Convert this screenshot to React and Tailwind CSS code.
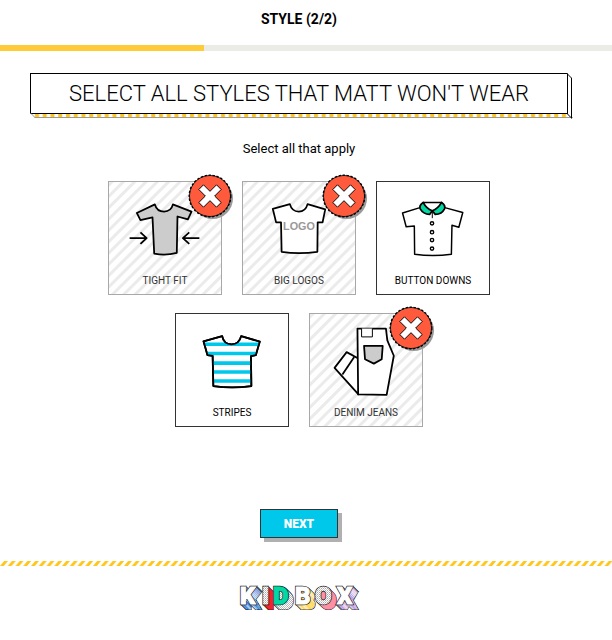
import React, { useState } from 'react';
import clsx from 'clsx';

const STYLES = [
  { id: 'tight-fit', label: 'TIGHT FIT', Icon: TightFitIcon },
  { id: 'big-logos', label: 'BIG LOGOS', Icon: BigLogosIcon },
  { id: 'button-downs', label: 'BUTTON DOWNS', Icon: ButtonDownsIcon },
  { id: 'stripes', label: 'STRIPES', Icon: StripesIcon },
  { id: 'denim-jeans', label: 'DENIM JEANS', Icon: DenimJeansIcon },
];

function IconFrame({ children }) {
  return (
    <svg
      viewBox="0 0 114 90"
      className="h-[90px] w-full"
      fill="#fff"
      stroke="#000"
      strokeWidth="1.8"
      strokeLinejoin="round"
      aria-hidden="true"
    >
      {children}
    </svg>
  );
}

function TightFitIcon() {
  return (
    <IconFrame>
      <path
        fill="#ccc"
        d="M28.3 30.7 46.7 22C48 26.5 51 29.3 56 29.3S64 26.5 65 22L84 29.3 80.3 37.3 69.7 34.3 69 71.3Q57.5 74.5 46 72L44.3 35.3 32 38Z"
      />
      <path fill="none" d="M21 56.3H38M32 50.5 38.3 56.3 32 62.2" />
      <path fill="none" d="M92 56.3H75.5M81.7 50.5 75.2 56.3 81.7 62.2" />
    </IconFrame>
  );
}

function BigLogosIcon() {
  return (
    <IconFrame>
      <path d="M30.3 26.5 47.7 21.7C49 26.5 52 29.3 56.7 29.3S64.5 26.5 65.7 21.7L83.7 27 81 40.3H76L75.7 70.3Q57 73 39.3 70.3L38.7 40.3H33.7Z" />
      <text
        x="57"
        y="48"
        textAnchor="middle"
        stroke="none"
        fill="#999"
        fontSize="11"
        fontWeight="700"
        fontFamily="Liberation Sans, sans-serif"
      >
        LOGO
      </text>
    </IconFrame>
  );
}

function ButtonDownsIcon() {
  return (
    <IconFrame>
      <path strokeWidth="1.5" d="M26 30.7 43.7 25.3 47 20H65.7L69 25.3 87.3 30.3 83.3 45.3 76.3 43.3 75.7 72.7Q57 75.3 38.3 72.7L38 44 29.7 44.7Z" />
      <path fill="#00d9a3" d="M47 20C44 22 43 24 44 26.5 46 30 49.5 32 53.5 32.2L56.3 28.5C52 27 49 24 47 20Z" />
      <path fill="#00d9a3" d="M65.7 20C68.7 22 69.7 24 68.7 26.5 67 30 63.5 32 59.3 32.2L56.3 28.5C60.5 27 63.5 24 65.7 20Z" />
      <path strokeWidth="1" d="M56.3 29V36" />
      <circle cx="56" cy="41.3" r="1.7" strokeWidth="1.4" />
      <circle cx="56" cy="50.3" r="1.7" strokeWidth="1.4" />
      <circle cx="56" cy="58.3" r="1.7" strokeWidth="1.4" />
      <circle cx="56" cy="67" r="1.7" strokeWidth="1.4" />
    </IconFrame>
  );
}

function StripesIcon() {
  const shirt =
    'M28 27 47 21.7C48 27 51.5 30 56.5 30S65 27 66.3 21.7L85.3 27.3 81.3 41 76.3 42 76.7 72.5Q57 75.3 38 72.5L37.3 41.7 32 41Z';
  return (
    <IconFrame>
      <clipPath id="striped-shirt">
        <path d={shirt} />
      </clipPath>
      <path d={shirt} />
      <path
        clipPath="url(#striped-shirt)"
        stroke="#00c8eb"
        strokeWidth="3.6"
        d="M26 30H88M26 39.5H88M26 49.2H88M26 58.3H88M26 67.5H88"
      />
      <path fill="none" d={shirt} />
    </IconFrame>
  );
}

function DenimJeansIcon() {
  return (
    <IconFrame>
      <path d="M37.3 38 25 54 49.3 81 52 46Z" />
      <path d="M45 43 33 60.7" />
      <path d="M48.3 14H77.3L78.7 26 85.3 41.7 78 81.5 49 81Z" />
      <path strokeWidth="1" d="M52.5 14V22.5H63.5V14" />
      <path fill="#ccc" d="M55 31.7H74L73 45.3 65 49.7 56 45.3Z" />
    </IconFrame>
  );
}

function RejectBadge() {
  return (
    <svg viewBox="0 0 46 46" className="absolute -top-2 -right-[13px] size-[46px]" aria-hidden="true">
      <circle cx="24.5" cy="24.5" r="20.5" fill="#999" />
      <circle cx="22" cy="22" r="20.5" fill="#ff5a3c" stroke="#222" strokeWidth="1" />
      <circle cx="22" cy="22" r="20.8" fill="none" stroke="#000" strokeWidth="1.4" strokeDasharray="2.3 1.7" />
      <path
        transform="rotate(45 22 22)"
        fill="#fff"
        stroke="#000"
        strokeWidth="0.9"
        d="M18.7 9.5H25.3V18.7H34.5V25.3H25.3V34.5H18.7V25.3H9.5V18.7H18.7Z"
      />
    </svg>
  );
}

function StyleCard({ item, checked, onToggle }) {
  const { id, label, Icon } = item;
  return (
    <label
      htmlFor={id}
      className={clsx(
        'relative flex size-[114px] cursor-pointer flex-col border',
        checked
          ? 'border-[#a8a8a8] bg-[repeating-linear-gradient(135deg,#ffffff_0px,#ebebeb_1px,#ebebeb_3px,#ffffff_4px,#ffffff_8px)] text-[#333]'
          : 'border-[#333] bg-white text-black'
      )}
    >
      <input id={id} type="checkbox" checked={checked} onChange={() => onToggle(id)} className="sr-only" />
      <Icon />
      <span className="text-center text-[10px] leading-[18px]">{label}</span>
      {checked && <RejectBadge />}
    </label>
  );
}

function Banner({ children }) {
  return (
    <div className="relative mx-[30px] border border-black bg-white">
      <h1 className="text-center text-[22px] leading-[39px] font-light">{children}</h1>
      {/* extruded bottom and right faces */}
      <div className="absolute top-full -right-px -left-px h-[5px] origin-top-left skew-x-[45deg] overflow-hidden border border-[#999] border-t-black bg-white">
        <svg className="block h-full w-full" aria-hidden="true">
          <defs>
            <pattern
              id="banner-dashes"
              width="7.75"
              height="8"
              patternUnits="userSpaceOnUse"
              patternTransform="skewX(-45)"
            >
              <rect x="3" width="4" height="8" fill="#ffc61a" />
            </pattern>
          </defs>
          <rect width="100%" height="100%" fill="url(#banner-dashes)" />
        </svg>
      </div>
      <div className="absolute -top-px -bottom-px left-full w-[5px] origin-top-left skew-y-[45deg] border border-black bg-white" />
    </div>
  );
}

const LOGO_LETTERS = [
  { char: 'K', x: 9, front: '#fff', side: 'url(#logo-blue)' },
  { char: 'I', x: 31, front: 'url(#logo-dots)', side: '#f5222d' },
  { char: 'D', x: 42, front: '#00d9a3', side: 'url(#logo-dots)' },
  { char: 'B', x: 64, front: '#fff', side: 'url(#logo-yellow)' },
  { char: 'O', x: 84, front: 'url(#logo-dots)', side: '#ff8fa3' },
  { char: 'X', x: 106, front: '#fff', side: 'url(#logo-purple)' },
];

const LOGO_STRIPES = [
  { id: 'logo-blue', color: '#1976e0' },
  { id: 'logo-yellow', color: '#ffd34d' },
  { id: 'logo-purple', color: '#b48be0' },
];

function Logo() {
  return (
    <svg viewBox="0 -8 136 44" className="h-11 w-[136px]" role="img" aria-label="Kidbox">
      <defs>
        {LOGO_STRIPES.map(({ id, color }) => (
          <pattern key={id} id={id} width="4" height="4" patternUnits="userSpaceOnUse" patternTransform="rotate(45)">
            <rect width="4" height="4" fill="#fff" />
            <rect width="2.4" height="4" fill={color} />
          </pattern>
        ))}
        <pattern id="logo-dots" width="2" height="2" patternUnits="userSpaceOnUse">
          <rect width="2" height="2" fill="#fff" />
          <rect width="1" height="1" fill="#aaa" />
          <rect x="1" y="1" width="1" height="1" fill="#ccc" />
        </pattern>
      </defs>
      {LOGO_LETTERS.map(({ char, x, front, side }) => (
        <g key={char} fontFamily="Roboto, sans-serif" fontSize="24" fontWeight="900">
          <g fill="#222" stroke="#222" strokeWidth="2.2">
            {[5, 4, 3, 2, 1].map((n) => (
              <use key={n} href={`#logo-${char}`} x={n} y={n} />
            ))}
          </g>
          <g fill={side} stroke={side} strokeWidth="1">
            {[5, 4, 3, 2, 1].map((n) => (
              <use key={n} href={`#logo-${char}`} x={n} y={n} />
            ))}
          </g>
          <use href={`#logo-${char}`} fill="#222" stroke="#222" strokeWidth="2.4" />
          <g fill={front} stroke={front} strokeWidth="1">
            <text id={`logo-${char}`} x={x} y="18">
              {char}
            </text>
          </g>
        </g>
      ))}
    </svg>
  );
}

const StyleQuiz = () => {
  const [rejected, setRejected] = useState(['tight-fit', 'big-logos', 'denim-jeans']);

  const handleToggle = (id) => {
    setRejected((prev) => (prev.includes(id) ? prev.filter((item) => item !== id) : [...prev, id]));
  };

  return (
    <div className="min-h-screen bg-white font-[Roboto,sans-serif] text-black">
      <header>
        <p className="pt-[9px] pr-[14px] pb-4 text-center text-sm leading-5 font-bold">STYLE (2/2)</p>
        <div className="h-[6px] bg-[#ebece6]">
          <div className="h-full w-1/3 bg-[#ffcb38]" />
        </div>
      </header>

      <main className="pt-[22px] pr-[14px]">
        <Banner>SELECT ALL STYLES THAT MATT WON'T WEAR</Banner>
        <form onSubmit={(e) => e.preventDefault()}>
          <fieldset>
            <legend className="w-full pt-[25px] text-center text-[13px] leading-5">Select all that apply</legend>
            <div className="mx-auto flex max-w-[400px] flex-wrap justify-center gap-x-5 gap-y-[18px] pt-[22px]">
              {STYLES.map((item) => (
                <StyleCard
                  key={item.id}
                  item={item}
                  checked={rejected.includes(item.id)}
                  onToggle={handleToggle}
                />
              ))}
            </div>
          </fieldset>
          <div className="flex justify-center pt-[82px]">
            <button
              type="submit"
              className="h-[29px] w-[78px] cursor-pointer border border-[#333] bg-[#00c8eb] text-xs font-black text-white shadow-[4px_4px_0_#b0b0b0]"
            >
              NEXT
            </button>
          </div>
        </form>
      </main>

      <footer className="pt-[23px]">
        <svg className="block h-[5px] w-full" aria-hidden="true">
          <defs>
            <pattern id="footer-stripes" width="7.75" height="5" patternUnits="userSpaceOnUse">
              <path fill="#ffc61a" d="M0 5H3.8L8 0H4.2ZM-7.75 5H-3.95L.25 0H-3.55Z" />
            </pattern>
          </defs>
          <rect width="100%" height="5" fill="url(#footer-stripes)" />
        </svg>
        <div className="flex justify-center pt-3 pr-[14px]">
          <Logo />
        </div>
      </footer>
    </div>
  );
};

export default StyleQuiz;
